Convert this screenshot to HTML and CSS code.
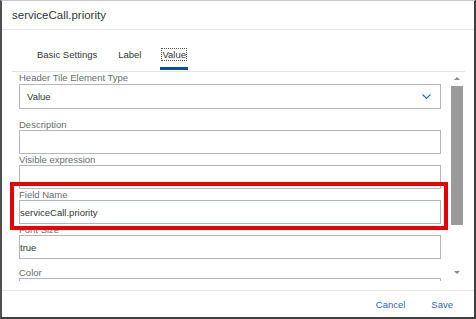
FILE: index.html
```html
<!DOCTYPE html>
<html>
<head>
<meta charset="utf-8">
<link rel="stylesheet" href="styles.css">
</head>
<body>
<div class="dialog">
  <div class="header"><span class="title">serviceCall.priority</span></div>
  <div class="tabbar">
    <span class="tab">Basic Settings</span>
    <span class="tab">Label</span>
    <span class="tab active"><span class="focus">Value</span></span>
  </div>
  <div class="scroll">
    <div class="form">
      <div class="label">Header Tile Element Type</div>
      <div class="select">
        <span class="select-text">Value</span>
        <svg class="chev" width="9" height="5" viewBox="0 0 9 5"><polyline points="0.5,0.5 4.5,4.5 8.5,0.5" fill="none" stroke="#2f6fba" stroke-width="1.1"/></svg>
      </div>
      <div class="label">Description</div>
      <div class="input"></div>
      <div class="label">Visible expression</div>
      <div class="input"></div>
      <div class="label">Field Name</div>
      <div class="input">serviceCall.priority</div>
      <div class="label">Font Size</div>
      <div class="input input-gap">true</div>
      <div class="label">Color</div>
      <div class="input"></div>
    </div>
    <div class="scrollbar">
      <div class="arrow up"></div>
      <div class="track"><div class="thumb"></div></div>
      <div class="arrow down"></div>
    </div>
  </div>
  <div class="spacer"></div>
  <div class="footer">
    <span class="btn">Cancel</span>
    <span class="btn">Save</span>
  </div>
  <div class="highlight"></div>
</div>
</body>
</html>
```
FILE: styles.css
```css
* { box-sizing: border-box; }
html, body { margin: 0; padding: 0; background: #fff; }
body { font-family: "Liberation Sans", Arial, sans-serif; color: #32363a; }

.dialog {
  position: relative;
  width: 476px;
  height: 319px;
  border-top: 1px solid #c8c8c8;
  border-left: 2px solid #505050;
  border-right: 2px solid #404040;
  border-bottom: 2px solid #404040;
  display: flex;
  flex-direction: column;
  overflow: hidden;
  background: #fff;
}

.header {
  height: 29px;
  flex: none;
  border-bottom: 1px solid #e5e5e5;
  display: flex;
  align-items: center;
  padding-left: 10px;
}
.title { font-size: 11.5px; color: #32363a; }

.tabbar {
  height: 42px;
  flex: none;
  margin-left: 10px;
  margin-right: 9px;
  border-bottom: 1px solid #e3e3e3;
  display: flex;
  align-items: flex-end;
  padding-left: 23px;
  gap: 17px;
}
.tab {
  position: relative;
  font-size: 9.5px;
  color: #32363a;
  padding: 0 2px 10px;
  line-height: 13px;
}
.tab.active::after {
  content: "";
  position: absolute;
  left: 0;
  right: 0;
  bottom: 1px;
  height: 3px;
  background: #0a4f9f;
}
.focus { outline: 1px dotted #555; outline-offset: 0; }

.scroll {
  height: 209px;
  flex: none;
  display: flex;
  overflow: hidden;
}
.form {
  width: 439px;
  padding-left: 17px;
  flex: none;
}
.label {
  font-size: 9.5px;
  color: #6a6d70;
  height: 11px;
  line-height: 11px;
  white-space: nowrap;
}
.select {
  margin-top: 1px;
  height: 25px;
  border: 1px solid #b2b8be;
  display: flex;
  align-items: center;
  justify-content: space-between;
  padding: 0 9px 0 7px;
  margin-bottom: 10px;
}
.select-text { font-size: 9.5px; color: #32363a; }
.input {
  height: 24px;
  border: 1px solid #b2b8be;
  font-size: 9.5px;
  color: #32363a;
  display: flex;
  align-items: center;
  padding-left: 0;
}
.input-gap { margin-bottom: 8px; }

.scrollbar {
  margin-left: 10px;
  width: 12px;
  display: flex;
  flex-direction: column;
}
.arrow {
  height: 12px;
  flex: none;
  display: flex;
  justify-content: center;
  align-items: center;
}
.arrow.up::before {
  content: "";
  border-left: 3px solid transparent;
  border-right: 3px solid transparent;
  border-bottom: 3px solid #8a8a8a;
}
.arrow.down::before {
  content: "";
  border-left: 3px solid transparent;
  border-right: 3px solid transparent;
  border-top: 3px solid #8a8a8a;
}
.track { flex: 1; padding-top: 2px; }
.thumb { height: 139px; background: #9a9a9a; }
.arrow.down { margin-bottom: 3px; }

.spacer { height: 9px; flex: none; }
.footer {
  flex: 1;
  border-top: 1px solid #e5e5e5;
  display: flex;
  justify-content: flex-end;
  align-items: center;
  gap: 26px;
  padding-right: 21px;
}
.btn { font-size: 9.5px; color: #2a6ab5; }

.highlight {
  position: absolute;
  left: 8px;
  top: 181px;
  width: 438px;
  height: 48px;
  border: 4px solid #e60000;
}
```
